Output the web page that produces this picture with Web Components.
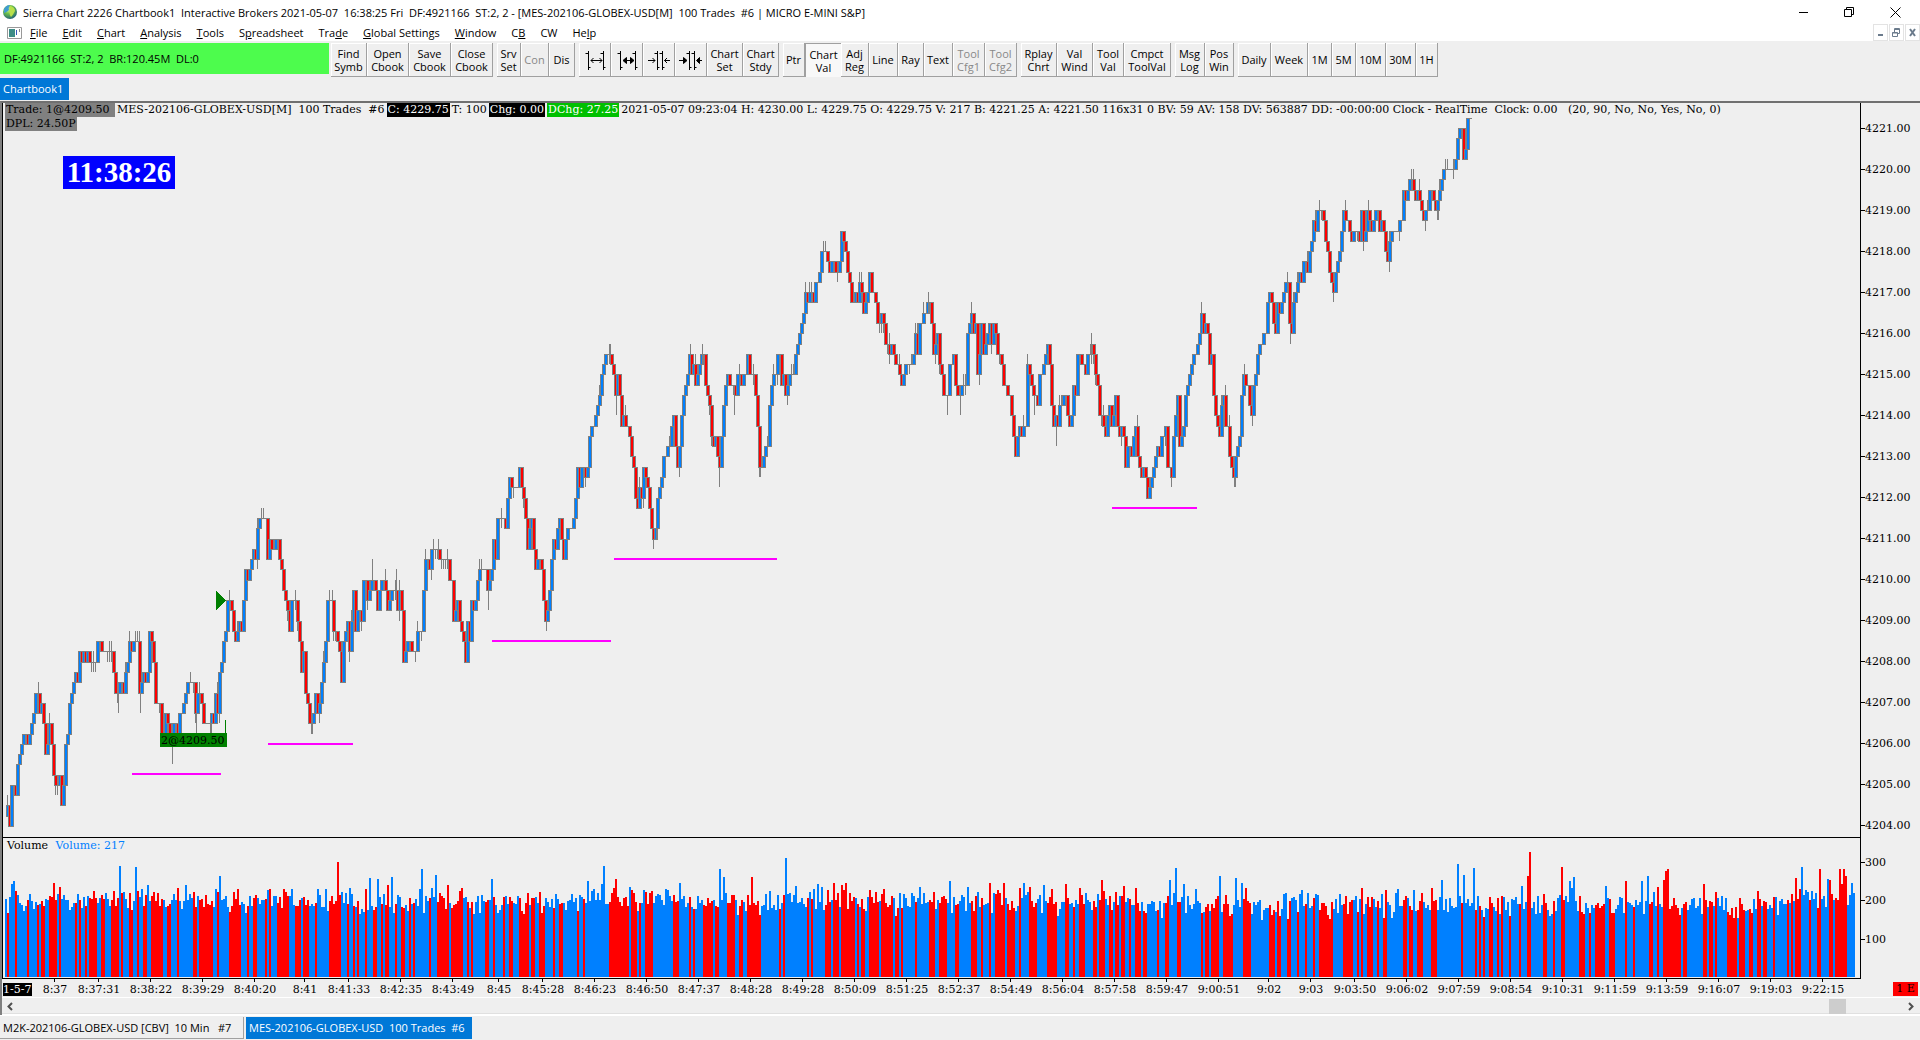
<!DOCTYPE html>
<html lang="en">
<head>
<meta charset="utf-8">
<title>Sierra Chart</title>
<style>
  html, body {
    margin: 0;
    height: 100%;
  }
  body {
    display: flex;
    flex-direction: column;
    background: #efefef;
    color: #000;
    font-family: "Open Sans", "Noto Sans", sans-serif;
    font-size: 11px;
    overflow: hidden;
  }
  chart-window {
    flex: 1;
  }
</style>
</head>
<body>
<title-bar>Sierra Chart 2226 Chartbook1&nbsp; Interactive Brokers 2021-05-07&nbsp; 16:38:25 Fri&nbsp; DF:4921166&nbsp; ST:2, 2 - [MES-202106-GLOBEX-USD[M]&nbsp; 100 Trades&nbsp; #6 | MICRO E-MINI S&amp;P]</title-bar>
<menu-bar></menu-bar>
<tool-bar>DF:4921166&nbsp; ST:2, 2&nbsp; BR:120.45M&nbsp; DL:0</tool-bar>
<tab-strip place="top"><book-tab active>Chartbook1</book-tab></tab-strip>
<chart-window></chart-window>
<tab-strip place="bottom">
  <book-tab wide="244">M2K-202106-GLOBEX-USD [CBV]&nbsp; 10 Min&nbsp;&nbsp; #7</book-tab>
  <book-tab wide="226" active>MES-202106-GLOBEX-USD&nbsp; 100 Trades&nbsp; #6</book-tab>
</tab-strip>

<script>
class TitleBar extends HTMLElement {
  connectedCallback() {
    const shadowRoot = this.attachShadow({ mode: "open" });
    shadowRoot.innerHTML = `
    <style>
      :host {
        display: flex;
        align-items: center;
        height: 24px;
        padding: 0 2px 0 3px;
        background: #fff;
      }
      .title {
        flex: 1;
        margin-left: 6px;
        white-space: nowrap;
      }
      button {
        width: 46px;
        height: 20px;
        padding: 0;
        border: 0;
        background: none;
      }
      svg { display: block; margin: auto; }
    </style>
    <svg width="14" height="16" style="margin:0" viewBox="0 0 14 16">
      <defs><radialGradient id="g" cx=".4" cy=".3" r=".8">
        <stop offset="0" stop-color="#d8f7a0"/><stop offset=".4" stop-color="#6cc04a"/><stop offset="1" stop-color="#14507c"/>
      </radialGradient></defs>
      <circle cx="7" cy="8" r="7" fill="url(#g)"/>
      <path d="M1 5Q3 1 7 1Q5 4 6 6Q3 9 1 9Z" fill="#3f9bd0"/>
      <path d="M7 2Q12 3 12 7Q10 11 8 13Q5 9 7 2Z" fill="#b8e04a"/>
    </svg>
    <span class="title"><slot></slot></span>
    <button aria-label="Minimize"><svg width="11" height="11"><path d="M1 5.5H10" stroke="#000"/></svg></button>
    <button aria-label="Restore"><svg width="11" height="11" fill="none" stroke="#000"><path d="M.5 2.5h7v7h-7zM2.5 2V.5h7v7H8"/></svg></button>
    <button aria-label="Close"><svg width="11" height="11" stroke="#000"><path d="M.5 .5L10.5 10.5M10.5 .5L.5 10.5"/></svg></button>
    `;
  }
}

class MenuBar extends HTMLElement {
  connectedCallback() {
    const items = ["_File", "_Edit", "_Chart", "_Analysis", "_Tools", "S_preadsheet", "Tra_de",
      "_Global Settings", "_Window", "C_B", "CW", "He_lp"];
    const shadowRoot = this.attachShadow({ mode: "open" });
    shadowRoot.innerHTML = `
    <style>
      :host {
        display: flex;
        align-items: center;
        height: 17px;
        padding-left: 7px;
        background: #fff;
      }
      nav { display: flex; flex: 1; gap: 15px; margin-left: 8px; }
      button {
        padding: 0;
        border: 0;
        background: none;
        font: inherit;
        line-height: 16px;
        color: inherit;
      }
      .mdi {
        width: 15px;
        height: 17px;
        margin-left: 1px;
        border: 1px solid #e3e3e3;
        box-sizing: border-box;
      }
      svg { display: block; margin: auto; }
    </style>
    <svg width="15" height="12" style="margin:0"><path d="M.5 .5h14v11H.5z" fill="#fff" stroke="#999"/><path d="M2 2h6v8H2z" fill="#3e8c86"/><path d="M9 3h1v5H9z" fill="#3355bb"/><path d="M12 2h1v3h-1z" fill="#888"/></svg>
    <nav>${items.map((t) => `<button>${t.replace(/_(.)/, "<u>$1</u>")}</button>`).join("")}</nav>
    <button class="mdi" aria-label="Minimize chart"><svg width="7" height="9"><path d="M1 7h5" stroke="#6b7b8c" stroke-width="2"/></svg></button>
    <button class="mdi" aria-label="Restore chart"><svg width="9" height="9" fill="none" stroke="#6b7b8c"><path d="M.5 4.5h5v4h-5zM.5 5h5M2.5 4V.5h5v5H6M3 1.5h5"/></svg></button>
    <button class="mdi" aria-label="Close chart"><svg width="9" height="9" stroke="#6b7b8c" stroke-width="2"><path d="M2 1l5 7M7 1L2 8"/></svg></button>
    `;
  }
}

class ToolBar extends HTMLElement {
  connectedCallback() {
    // label, width in px, state
    const groups = [
      [["Find Symb", 36], ["Open Cbook", 42], ["Save Cbook", 42], ["Close Cbook", 42]],
      [["Srv Set", 24], ["Con", 28, "disabled"], ["Dis", 26]],
      [["#out", 32], ["#outBold", 32], ["#in", 32], ["#inBold", 32], ["Chart Set", 36], ["Chart Stdy", 36]],
      [["Ptr", 22], ["Chart Val", 36, "class=on"], ["Adj Reg", 28], ["Line", 29], ["Ray", 26], ["Text", 29],
        ["Tool Cfg1", 32, "disabled"], ["Tool Cfg2", 32, "disabled"]],
      [["Rplay Chrt", 36], ["Val Wind", 36], ["Tool Val", 31], ["Cmpct ToolVal", 47]],
      [["Msg Log", 30], ["Pos Win", 29]],
      [["Daily", 33], ["Week", 37], ["1M", 24], ["5M", 24], ["10M", 30], ["30M", 30], ["1H", 22]],
    ];
    // a price bar with its open tick on the left and its close tick on the right
    const bar = (x) => `M${x} 1V20M${x - 3} 3.5H${x}M${x} 17.5H${x + 2}`;
    const icons = {
      "#out": ["Wider bars", `<path d="${bar(5.5)}${bar(20.5)}M8 10.5H19M10.5 8L8 10.5L10.5 13M16.5 8L19 10.5L16.5 13"/>`],
      "#outBold": ["Much wider bars", `<path d="${bar(5.5)}${bar(20.5)}M9 10.5H18"/><path d="M11.500 7.500v6L8 10.500zM15.500 7.500v6L19 10.500z" fill="#000"/>`],
      "#in": ["Narrower bars", `<path d="${bar(10.5)}${bar(15.5)}M1 10.5H8M5.500 8L8 10.5L5.500 13M23 10.5H17.500M20 8L17.500 10.500L20 13"/>`],
      "#inBold": ["Much narrower bars", `<path d="${bar(10.5)}${bar(15.5)}M0 10.5H5M20 10.5H23"/><path d="M4.500 7.500v6L8 10.500zM20.500 7.500v6L17.500 10.500z" fill="#000"/>`],
    };
    const face = (t) => icons[t]
      ? `<svg width="23" height="20" fill="none" stroke="#000" role="img" aria-label="${icons[t][0]}">${icons[t][1]}</svg>`
      : t.replace(" ", "<br>");
    const shadowRoot = this.attachShadow({ mode: "open" });
    shadowRoot.innerHTML = `
    <style>
      :host {
        display: flex;
        gap: 4px;
        height: 34px;
        padding: 2px 0 0;
      }
      .status {
        box-sizing: border-box;
        width: 329px;
        height: 31px;
        margin-right: -2px;
        padding-left: 4px;
        background: #4dfc4d;
        line-height: 31px;
      }
      .group { display: flex; }
      button {
        box-sizing: border-box;
        height: 34px;
        padding: 0;
        border: solid #a0a0a0;
        border-width: 0 1px 1px 0;
        box-shadow: inset 1px 1px #fff;
        background: #efefef;
        color: #000;
        font: inherit;
        line-height: 13px;
        white-space: nowrap;
      }
      button:disabled { color: #888; }
      .on {
        border-width: 1px 0 0 1px;
        background: #f8f8f8;
        box-shadow: none;
      }
      svg { display: block; margin: auto; }
    </style>
    <div class="status"><slot></slot></div>
    ${groups.map((g) => `<div class="group">${g.map(([t, w, s = ""]) =>
      `<button style="width:${w}px" ${s}>${face(t)}</button>`).join("")}</div>`).join("")}
    `;
  }
}

class TabStrip extends HTMLElement {
  connectedCallback() {
    const shadowRoot = this.attachShadow({ mode: "open" });
    shadowRoot.innerHTML = `
    <style>
      :host {
        display: flex;
        gap: 2px;
        height: 23px;
        padding-top: 1px;
        flex: none;
      }
      :host([place="bottom"]) {
        border-top: 1px solid #fff;
      }
    </style>
    <slot></slot>
    `;
  }
}

class BookTab extends HTMLElement {
  connectedCallback() {
    const wide = this.getAttribute("wide");
    const shadowRoot = this.attachShadow({ mode: "open" });
    shadowRoot.innerHTML = `
    <style>
      :host { display: block; }
      button {
        display: block;
        box-sizing: border-box;
        width: ${wide ? wide + "px" : "69px"};
        height: 22px;
        padding: 0 0 0 3px;
        border: solid #a0a0a0;
        border-width: 0 1px 1px 0;
        background: #efefef;
        color: #000;
        font: inherit;
        text-align: left;
        white-space: nowrap;
      }
      :host([active]) button {
        border-color: #0078d7;
        background: #0078d7;
        color: #fff;
      }
    </style>
    <button><slot></slot></button>
    `;
  }
}

// Turning points of the 100-trade series: x position, price in quarter points above 4204
const PATH = `5,1 7,2 9,0 12,4 16,3 18,6 21,8 24,9 28,8 32,10 36,13 38,13 40,11 42,12 44,10 46,7 49,10 52,8 54,5 56,4 59,5
61,2 63,4 66,8 70,12 74,14 76,15 77,14 79,17 82,16 84,17 86,16 88,17 90,16 96,16 98,18 101,17 112,17 113,15 116,13 120,14
123,13 126,15 129,18 131,17 134,18 137,18 139,13 143,15 146,14 150,19 153,16 155,12 159,12 161,9 164,9 166,11 169,9 171,8
174,10 177,9 180,11 184,12 187,14 193,14 195,11 198,13 202,12 204,10 208,10 211,11 213,10 215,13 217,11 220,15 224,18
228,22 231,21 232,19 236,18 239,20 241,19 243,22 245,25 248,24 253,27 256,26 258,29 260,30 265,30 267,26 270,28 272,27
275,28 278,28 280,26 283,23 287,21 289,19 292,22 296,22 298,20 300,18 301,15 303,17 306,13 308,12 310,10 313,11 315,13
318,11 321,14 325,18 328,22 331,22 334,19 337,18 339,17 341,14 344,18 347,20 349,17 353,23 355,19 358,21 361,20 364,24
368,22 371,24 375,23 377,21 381,24 385,23 388,21 392,23 396,23 398,21 400,23 402,21 404,16 408,18 411,17 415,17 417,19
421,19 422,22 426,26 430,25 432,27 444,26 447,26 449,24 452,24 454,20 458,22 460,20 463,18 465,16 467,20 469,18 471,22
474,21 477,24 480,25 486,25 488,23 490,24 493,28 495,26 498,30 503,30 505,29 509,34 512,33 517,33 519,35 522,33 525,30
527,27 531,30 533,27 535,25 538,26 541,25 543,22 545,20 547,21 549,23 551,26 553,28 555,27 559,30 562,28 563,26 566,28
568,29 572,29 575,32 577,35 580,33 582,35 585,34 587,35 588,38 592,39 595,40 599,42 602,44 606,46 610,46 612,45 614,44
615,42 618,44 621,39 623,40 626,39 629,38 631,36 633,35 635,32 637,31 639,33 641,32 644,35 647,33 649,31 651,29 653,28
655,29 658,32 661,34 664,36 669,37 673,40 675,37 677,35 680,37 682,40 684,42 687,44 689,46 691,44 693,45 695,43 698,44
701,46 703,46 705,43 709,41 711,38 713,37 715,38 717,36 719,35 721,38 723,41 727,44 730,43 733,43 735,42 738,44 741,43
745,44 747,46 749,44 753,44 755,42 757,39 759,35 762,35 765,37 768,37 769,41 771,43 775,44 777,46 780,46 781,43 783,44
786,42 789,44 793,44 796,46 799,48 803,50 805,52 807,51 811,52 813,51 816,53 820,54 822,56 826,56 829,54 832,55 835,54
838,54 841,58 842,57 845,56 847,54 849,53 852,51 856,52 858,51 860,53 864,50 869,54 871,52 875,51 878,49 882,50 886,47
889,46 892,47 894,46 896,45 899,44 902,43 905,45 911,45 913,46 915,48 917,46 920,49 923,50 928,51 932,49 934,46 938,48
940,45 944,42 947,42 950,45 954,46 956,43 958,42 963,43 966,43 968,48 971,50 973,48 975,49 977,44 979,46 981,49 983,46
986,47 989,49 991,47 994,49 997,46 1001,45 1004,43 1009,42 1011,40 1013,38 1015,36 1019,39 1021,38 1023,39 1026,39
1028,45 1031,43 1034,42 1037,41 1040,44 1044,45 1047,47 1049,45 1051,41 1053,39 1055,40 1057,39 1060,41 1065,42 1068,40
1070,39 1073,43 1075,42 1078,46 1082,45 1085,44 1087,46 1092,47 1095,44 1097,43 1100,40 1103,39 1105,38 1109,41 1112,39
1116,42 1118,39 1120,38 1122,39 1125,35 1128,37 1131,36 1135,39 1138,36 1141,34 1144,35 1147,32 1150,33 1153,35 1157,37
1160,36 1162,38 1165,39 1168,35 1171,34 1173,38 1177,42 1180,37 1183,39 1186,42 1190,44 1194,46 1198,47 1201,50 1204,48
1206,49 1209,45 1211,46 1212,42 1216,40 1219,38 1221,41 1223,42 1225,39 1228,39 1229,36 1233,34 1236,36 1239,38 1241,42
1244,44 1246,43 1250,41 1252,40 1254,43 1257,46 1261,47 1265,48 1267,51 1270,52 1273,49 1275,48 1278,51 1280,50 1283,52
1287,53 1289,49 1291,48 1294,51 1297,53 1299,54 1300,52 1304,55 1307,54 1309,56 1311,57 1313,59 1315,58 1317,60 1320,60
1323,59 1326,57 1329,54 1333,52 1336,54 1338,55 1341,58 1343,60 1346,59 1351,57 1355,58 1359,57 1361,60 1364,57 1367,60
1372,58 1376,60 1380,58 1382,59 1385,56 1387,55 1389,57 1392,58 1398,58 1400,59 1402,59 1403,62 1406,61 1410,63 1413,62
1415,61 1417,62 1420,61 1423,59 1427,60 1430,62 1433,61 1436,60 1440,62 1443,64 1453,64 1455,65 1457,67 1461,68 1463,65
1465,66 1467,69 1471,69`.split(/\s+/).map((p) => p.split(",").map(Number));

// Long shadows: x, quarter points from, to
const SHADOWS = [[38, 14, 12], [118, 13, 11], [140, 13, 11], [172, 8, 6], [196, 13, 9], [190, 15, 14], [210, 10, 8],
  [263, 31, 30], [312, 10, 9], [332, 23, 20], [372, 26, 24], [396, 25, 23], [438, 28, 26], [488, 23, 21], [546, 20, 19],
  [610, 47, 45], [616, 42, 40], [656, 29, 28], [690, 47, 45], [702, 47, 45], [719, 35, 33], [760, 35, 34], [734, 42, 40],
  [928, 52, 50], [947, 42, 40], [960, 42, 40], [1034, 42, 40], [1056, 39, 37], [1091, 48, 46], [1171, 34, 33],
  [1201, 51, 50], [1234, 34, 33], [1244, 45, 44], [1252, 40, 39], [1290, 48, 47], [1368, 61, 60], [1438, 60, 59]];

// Runs of down-volume bars: x+count
const DOWN = `7+1 15+1 27+1 37+1 41+2 49+4 59+1 75+1 79+1 85+1 89+3 95+1 101+2 111+4 121+1 129+2 137+1 143+2 151+6 167+2
177+1 193+2 199+6 211+1 217+1 229+5 239+1 247+1 253+2 265+1 269+1 277+6 295+3 303+3 315+1 329+6 347+1 353+1 357+1 365+1
373+2 381+1 385+2 395+1 401+2 409+1 413+1 429+1 437+6 451+6 467+1 471+1 485+2 493+1 503+1 509+2 519+5 531+2 539+3 553+1
559+2 577+1 583+1 609+5 619+5 631+3 639+1 645+4 673+3 689+1 693+1 703+5 715+2 727+4 739+2 747+7 779+1 783+1 807+1 811+1
825+3 833+3 841+7 857+1 861+2 869+5 881+6 895+2 901+1 915+1 929+3 939+4 955+2 971+3 981+1 989+1 995+5 1007+4 1019+1
1029+4 1047+5 1065+2 1073+1 1079+3 1093+2 1099+3 1109+2 1115+2 1121+2 1129+1 1135+3 1143+2 1157+1 1165+2 1177+2 1201+1
1205+2 1211+4 1223+5 1243+4 1269+3 1277+2 1287+2 1297+1 1305+1 1313+1 1319+7 1343+5 1357+1 1361+1 1367+3 1377+1 1383+2
1403+2 1409+2 1417+3 1431+3 1461+1 1475+1 1479+1 1483+1 1489+2 1497+1 1501+1 1509+1 1519+1 1527+2 1543+2 1553+1 1561+2
1579+3 1589+1 1595+5 1609+3 1625+1 1633+1 1649+2 1657+1 1663+9 1683+2 1703+2 1709+2 1715+1 1727+5 1739+3 1749+2 1757+2
1763+2 1773+1 1787+1 1791+1 1795+3 1809+1 1817+2 1829+2 1835+6`;

// Bars that stand out: x:height
const PEAKS = `13:96 53:94 119:111 135:110 219:101 337:115 369:99 377:98 391:100 421:108 435:102 491:98 587:96 603:111
615:98 679:94 719:108 723:100 751:100 785:119 795:91 817:93 833:94 841:92 869:87 919:90 949:96 967:90 989:94 1003:94
1023:94 1043:92 1065:93 1101:97 1123:91 1135:89 1169:97 1175:109 1183:93 1195:88 1219:101 1235:99 1241:94 1245:89 1301:87
1361:89 1385:87 1441:97 1457:113 1463:102 1473:109 1521:91 1527:101 1529:125 1561:110 1569:96 1573:100 1605:91 1625:96
1641:96 1647:101 1657:90 1663:97 1665:106 1667:108 1703:93 1795:99 1801:110 1819:108 1827:98 1829:97 1839:108 1841:93
1843:108 1845:101 1851:94 1853:84`;

let seed = 7;
function rnd() {
  seed = (seed * 16807) % 2147483647;
  return seed / 2147483647;
}

class PricePane extends HTMLElement {
  connectedCallback() {
    // y is measured inside the pane, x from its left border
    const y = (t) => Math.round(723 - t * 10.265);
    const rect = (x, top, w, h, fill) => `<rect x="${x - 3}" y="${top}" width="${w}" height="${h}" fill="${fill}"/>`;
    let out = "";
    let seg = 0;
    let open = 1;
    for (let x = 7; x <= 1469; x += 2) {
      while (seg < PATH.length - 2 && PATH[seg + 1][0] < x) seg++;
      const [x0, t0] = PATH[seg];
      const [x1, t1] = PATH[seg + 1];
      const k = Math.max(0, Math.min(1, (x - x0) / (x1 - x0)));
      let close = Math.round(t0 + (t1 - t0) * k);
      if (x1 - x < 2) close = t1;
      const hi = Math.max(open, close);
      const lo = Math.min(open, close);
      const flat = hi === lo;
      const up = rnd() < (flat ? 0.3 : 0.08) ? 1 : 0;
      const down = rnd() < (flat ? 0.45 : 0.12) ? 1 : 0;
      if (up || down) out += rect(x, y(hi + up), 1, y(lo - down) - y(hi + up), "#808080");
      out += rect(x - 1, y(hi), 4, y(lo) - y(hi) + 1, "#808080");
      if (!flat) out += rect(x, y(hi) + 1, 2, y(lo) - y(hi) - 1, close > open ? "#0080ff" : "#f00");
      open = close;
    }
    for (const [x, a, b] of SHADOWS) out += rect(x, y(a), 1, y(b) - y(a), "#808080");
    for (const [x, top, w] of [[132, 773, 89], [268, 743, 85], [492, 640, 119], [614, 558, 163], [1112, 507, 85]]) {
      out += rect(x, top - 103, w, 2, "#f0f");
    }
    const shadowRoot = this.attachShadow({ mode: "open" });
    shadowRoot.innerHTML = `
    <style>
      :host {
        position: relative;
        display: block;
        min-width: 0;
        overflow: hidden;
        border-bottom: 1px solid #000;
      }
      svg {
        position: absolute;
        width: 100%;
        height: 100%;
        shape-rendering: crispEdges;
      }
      p {
        position: relative;
        display: flex;
        gap: 2px;
        margin: 0;
        padding-left: 2px;
        line-height: 14px;
        white-space: nowrap;
      }
      mark { height: 14px; background: #808080; color: #000; padding: 0 1px; }
      .trade { width: 108px; }
      .k { background: #000; color: #fff; }
      .g { background: #00c000; color: #fff; }
      time {
        position: absolute;
        left: 60px;
        top: 53px;
        width: 112px;
        height: 33px;
        background: #00f;
        color: #fff;
        font: bold 29px/33px "Liberation Serif", serif;
        text-align: center;
      }
    </style>
    <svg>${out}
      <path d="M213 488L223 497.500L213 507Z" fill="#008000"/>
      <path d="M222.500 617V631" stroke="#008000"/>
      <rect x="157" y="630" width="67" height="14" fill="#008000"/>
      <text x="158" y="641">2@4209.50</text>
    </svg>
    <p>
      <mark class="trade">Trade: 1@4209.50</mark>
      <span>MES-202106-GLOBEX-USD[M]&nbsp; 100 Trades&nbsp; #6</span>
      <mark class="k">C: 4229.75</mark>
      <span>T: 100</span>
      <mark class="k">Chg: 0.00</mark>
      <mark class="g">DChg: 27.25</mark>
      <span>2021-05-07 09:23:04 H: 4230.00 L: 4229.75 O: 4229.75 V: 217 B: 4221.25 A: 4221.50 116x31 0 BV: 59 AV: 158 DV: 563887 DD: -00:00:00 Clock - RealTime&nbsp; Clock: 0.00&nbsp;&nbsp; (20, 90, No, No, Yes, No, 0)</span>
    </p>
    <p><mark>DPL: 24.50P</mark></p>
    <time>11:38:26</time>
    `;
  }
}

class VolumePane extends HTMLElement {
  connectedCallback() {
    const down = new Set();
    for (const run of DOWN.split(/\s+/)) {
      const [x, n] = run.split("+").map(Number);
      for (let i = 0; i < n; i++) down.add(x + i * 2);
    }
    const peaks = new Map(PEAKS.split(/\s+/).map((p) => p.split(":").map(Number)));
    let out = "";
    for (let x = 5; x < 1855; x += 2) {
      const h = peaks.get(x) || Math.round(53 + (rnd() + rnd() + rnd()) * 13 + (x < 1150 ? 4 : 0) + (x > 1790 ? 5 : 0));
      out += `<rect x="${x - 3}" y="${139 - h}" width="2" height="${h}" fill="${down.has(x) ? "#f00" : "#0080ff"}"/>`;
    }
    const shadowRoot = this.attachShadow({ mode: "open" });
    shadowRoot.innerHTML = `
    <style>
      :host {
        position: relative;
        display: block;
        min-width: 0;
        overflow: hidden;
        border-bottom: 1px solid #000;
      }
      svg { position: absolute; width: 100%; height: 100%; shape-rendering: crispEdges; }
      p { position: relative; margin: 0; padding-left: 4px; line-height: 16px; }
      span { margin-left: 4px; color: #0080ff; }
    </style>
    <svg>${out}</svg>
    <p>Volume <span>Volume: 217</span></p>
    `;
  }
}

class ValueAxis extends HTMLElement {
  connectedCallback() {
    const from = Number(this.getAttribute("from"));
    const to = Number(this.getAttribute("to"));
    const step = Number(this.getAttribute("step"));
    const digits = Number(this.getAttribute("digits"));
    let rows = "";
    for (let v = from; v >= to; v -= step) rows += `<span>${v.toFixed(digits)}</span>`;
    const shadowRoot = this.attachShadow({ mode: "open" });
    shadowRoot.innerHTML = `
    <style>
      :host {
        display: flex;
        flex-direction: column;
        justify-content: space-between;
        border-left: 1px solid #000;
      }
      span { display: flex; align-items: center; height: 16px; }
      span::before { content: ""; width: 4px; height: 1px; background: #000; }
    </style>
    ${rows}
    `;
  }
}

class TimeAxis extends HTMLElement {
  connectedCallback() {
    const marks = `54 8:37,98 8:37:31,150 8:38:22,202 8:39:29,254 8:40:20,304 8:41,348 8:41:33,400 8:42:35,452 8:43:49,498 8:45,542 8:45:28,594 8:46:23,646 8:46:50,698 8:47:37,750 8:48:28,802 8:49:28,854 8:50:09,906 8:51:25,958 8:52:37,1010 8:54:49,1062 8:56:04,1114 8:57:58,1166 8:59:47,1218 9:00:51,1268 9:02,1310 9:03,1354 9:03:50,1406 9:06:02,1458 9:07:59,1510 9:08:54,1562 9:10:31,1614 9:11:59,1666 9:13:59,1718 9:16:07,1770 9:19:03,1822 9:22:15`;
    const labels = marks.split(",").map((m) => {
      const [x, t] = m.split(" ");
      return `<path d="M${x - 1.5} 0v3" stroke="#000"/><text x="${x - 1}" y="14">${t}</text>`;
    });
    const shadowRoot = this.attachShadow({ mode: "open" });
    shadowRoot.innerHTML = `
    <style>
      :host { display: flex; height: 18px; }
      b { margin: 4px 0 0 1px; width: 29px; height: 13px; background: #000; color: #fff; font-weight: normal; line-height: 13px; overflow: hidden; white-space: nowrap; }
      svg { flex: 1; min-width: 0; height: 18px; margin-left: -30px; }
      text { text-anchor: middle; }
      i { margin: 3px 2px 0 0; width: 25px; height: 14px; background: #f00; font-style: normal; line-height: 14px; text-align: center; }
    </style>
    <b>1-5-7</b>
    <svg>${labels.join("")}</svg>
    <i>1 E</i>
    `;
  }
}

class ChartWindow extends HTMLElement {
  connectedCallback() {
    const shadowRoot = this.attachShadow({ mode: "open" });
    shadowRoot.innerHTML = `
    <style>
      :host {
        display: flex;
        flex-direction: column;
        min-height: 0;
        border-top: 2px solid #707070;
        border-left: 2px solid #808080;
        font-family: "DejaVu Serif", serif;
        font-size: 11px;
      }
      .panes {
        flex: 1;
        display: grid;
        grid-template-columns: minmax(0, 1fr) 60px;
        grid-template-rows: minmax(0, 1fr) 141px;
        min-height: 0;
        border-left: 1px solid #000;
      }
      .price { padding: 17px 0 5px; }
      .volume { padding: 16px 0 32px; }
      .scroll {
        display: flex;
        align-items: center;
        height: 16px;
        padding: 0 3px;
        border: solid #fff;
        border-width: 1px 0;
        box-shadow: inset 0 -1px #e0e0e0;
      }
      .scroll button { width: 10px; height: 15px; padding: 0; border: 0; background: none; }
      .scroll svg { display: block; }
      .track { flex: 1; display: flex; justify-content: flex-end; padding-right: 61px; }
      .thumb { width: 17px; height: 15px; background: #cdcdcd; }
    </style>
    <div class="panes">
      <price-pane></price-pane>
      <value-axis class="price" from="4221" to="4204" step="1" digits="2"></value-axis>
      <volume-pane></volume-pane>
      <value-axis class="volume" from="300" to="100" step="100" digits="0"></value-axis>
    </div>
    <time-axis></time-axis>
    <div class="scroll">
      <button aria-label="Scroll left"><svg width="10" height="15" fill="none" stroke="#505050" stroke-width="2"><path d="M7 4L3.500 7.500L7 11"/></svg></button>
      <div class="track"><div class="thumb"></div></div>
      <button aria-label="Scroll right"><svg width="10" height="15" fill="none" stroke="#505050" stroke-width="2"><path d="M2 4L5.500 7.500L2 11"/></svg></button>
    </div>
    `;
  }
}

customElements.define("title-bar", TitleBar);
customElements.define("menu-bar", MenuBar);
customElements.define("tool-bar", ToolBar);
customElements.define("tab-strip", TabStrip);
customElements.define("book-tab", BookTab);
customElements.define("price-pane", PricePane);
customElements.define("volume-pane", VolumePane);
customElements.define("value-axis", ValueAxis);
customElements.define("time-axis", TimeAxis);
customElements.define("chart-window", ChartWindow);
</script>
</body>
</html>
